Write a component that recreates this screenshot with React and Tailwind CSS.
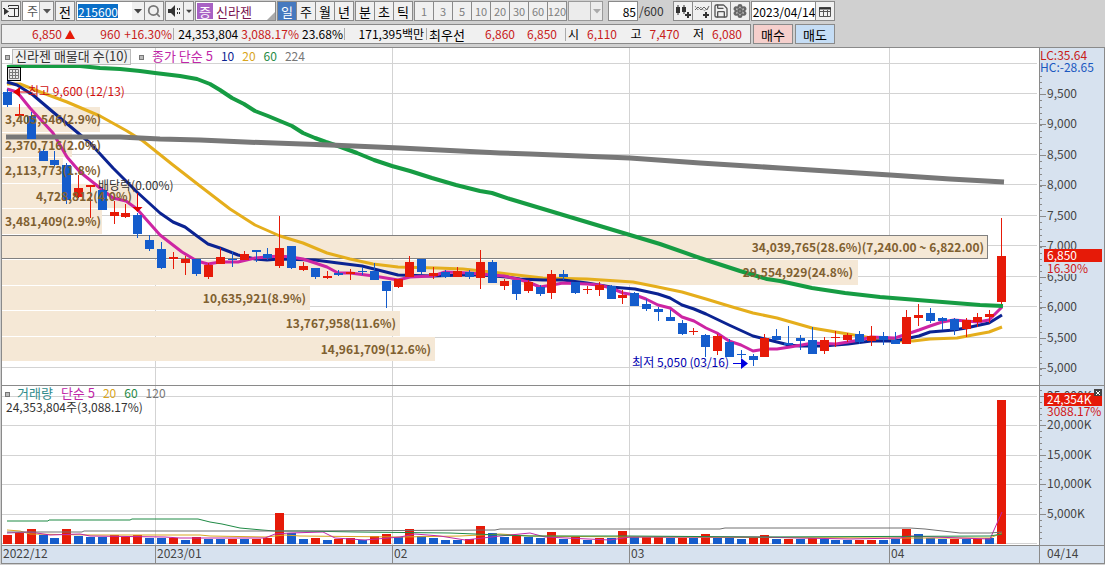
import { useState } from "react";
import { Save, Search, Settings } from "lucide-react";

const RED = "#e61a08";
const BLUE = "#145ccc";

// Plot geometry: both panes share one x range
const X0 = 2;
const PLOT_W = 1037;
const STEP = 994 / 84;
const PRICE_TOP = 48;
const VOLUME_TOP = 386;

const candleX = (i) => 7.5 + i * STEP;
const leftOf = (x) => `${((x - X0) / PLOT_W) * 100}%`;
const rightOf = (x) => `${((X0 + PLOT_W - x) / PLOT_W) * 100}%`;

// [direction, body top, body bottom, high, low]
const CANDLES = [
  ["d", 92, 105, 89, 107], ["u", 114, 116, 104, 117], ["d", 116, 139, 112, 139], ["d", 151, 161, 149, 161],
  ["d", 160, 165, 151, 166], ["d", 165, 200, 163, 204], ["u", 188, 197, 175, 198], ["u", 185, 187, 185, 218],
  ["d", 190, 210, 188, 210], ["u", 212, 216, 201, 224], ["u", 213, 217, 204, 218], ["d", 215, 234, 213, 238],
  ["d", 240, 249, 235, 251], ["d", 249, 268, 242, 269], ["u", 257, 259, 252, 269], ["u", 259, 263, 256, 275],
  ["d", 259, 274, 259, 276], ["u", 265, 277, 263, 279], ["u", 257, 264, 248, 264], ["d", 259, 260, 251, 267],
  ["u", 254, 260, 251, 260], ["d", 250, 252, 250, 262], ["d", 254, 258, 248, 260], ["u", 248, 266, 216, 268],
  ["d", 246, 268, 246, 269], ["u", 266, 270, 262, 271], ["d", 268, 277, 268, 279], ["u", 276, 278, 271, 279],
  ["d", 273, 275, 270, 276], ["u", 272, 274, 269, 280], ["d", 271, 272, 267, 275], ["d", 271, 280, 263, 280],
  ["d", 281, 291, 281, 308], ["u", 279, 287, 279, 288], ["u", 262, 277, 256, 277], ["d", 259, 272, 259, 274],
  ["u", 273, 276, 267, 279], ["d", 272, 277, 270, 278], ["u", 271, 277, 267, 277], ["d", 272, 277, 270, 279],
  ["u", 262, 278, 250, 289], ["d", 262, 283, 260, 283], ["u", 281, 286, 279, 290], ["d", 280, 294, 280, 300],
  ["u", 282, 291, 280, 293], ["d", 287, 294, 285, 296], ["u", 274, 293, 270, 299], ["d", 274, 277, 270, 280],
  ["d", 282, 293, 282, 294], ["u", 289, 290, 286, 294], ["u", 285, 290, 282, 296], ["d", 286, 299, 285, 299],
  ["u", 295, 298, 290, 304], ["d", 293, 306, 292, 306], ["d", 304, 309, 299, 311], ["d", 309, 312, 307, 321],
  ["d", 317, 321, 310, 321], ["d", 323, 334, 320, 335], ["u", 331, 332, 328, 335], ["d", 335, 347, 334, 357],
  ["u", 336, 351, 334, 355], ["d", 342, 357, 339, 357], ["d", 354, 355, 350, 358], ["d", 356, 360, 354, 366],
  ["u", 338, 357, 334, 357], ["d", 336, 340, 329, 340], ["d", 343, 345, 326, 345], ["d", 338, 341, 335, 350],
  ["d", 340, 354, 327, 354], ["u", 340, 351, 337, 354], ["u", 337, 338, 331, 347], ["u", 335, 340, 333, 342],
  ["d", 334, 342, 331, 344], ["u", 336, 341, 326, 346], ["d", 336, 340, 332, 345], ["d", 340, 344, 332, 344],
  ["u", 317, 344, 310, 344], ["u", 315, 318, 304, 326], ["d", 313, 321, 308, 323], ["d", 318, 321, 317, 330],
  ["d", 319, 330, 318, 335], ["u", 320, 329, 318, 337], ["u", 317, 322, 313, 327], ["u", 314, 317, 310, 323],
  ["u", 256, 302, 218, 304],
];

// Bar heights; the letter gives the colour against the previous day's volume
const VOLUMES =
  "u9 u11 u15 d9 d6 u15 d8 d7 d7 u9 u7 u9 d6 d6 u6 d4 u7 d5 d5 u5 d5 u5 u6 u31 d11 d5 u6 d4 u5 u6 d4 u8 u10 d7 u15 d8 d6 d4 d4 u5 u18 d11 d7 u9 d7 d6 u12 d5 u7 d4 u6 d6 u13 d7 u7 u7 d6 u6 d6 u10 d6 d6 d5 u6 u9 d5 u5 d5 u6 d5 d4 d4 u4 u4 d4 d5 u15 d10 d6 d5 u5 d5 u5 d6 u144".split(" ");

const PRICE_LINES = [
  {
    color: "#e5ae1c", width: 3,
    points: "7,84 20,84 43,93 67,102 100,116 127,131 143,141 173,165 200,186 230,209 255,225 280,236 303,243 327,253 350,259 373,264 398,267 437,268 463,269 500,273 543,278 587,279 633,282 658,287 682,292 706,299 729,306 753,313 777,318 812,328 848,334 883,340 895,341 913,341 930,339 957,338 978,334 989,332 1002,327",
  },
  {
    color: "#0b2392", width: 3,
    points: "7,82 17,85 25,90 33,95 53,112 90,143 113,168 137,192 160,213 173,222 185,227 197,236 208,244 220,248 238,255 255,259 267,260 279,259 315,260 338,263 362,266 374,269 398,275 433,276 463,275 481,275 507,277 520,279 543,280 563,280 587,283 611,287 635,289 658,294 670,298 682,305 694,309 706,314 729,325 753,336 765,339 789,345 800,346 823,346 848,344 871,341 895,341 919,336 930,332 954,330 966,328 989,323 1002,315",
  },
  {
    color: "#cd25a3", width: 3,
    points: "7,89 17,92 30,108 53,133 67,157 80,172 100,188 113,198 126,201 137,209 160,235 182,252 197,261 208,264 220,262 238,262 255,258 279,256 291,257 303,259 315,263 327,267 338,273 350,273 374,276 398,280 410,277 433,276 445,272 469,273 492,275 504,276 517,279 528,282 540,287 552,285 563,283 587,284 599,285 611,288 623,293 635,295 646,299 658,305 670,308 682,317 694,321 706,328 717,333 729,341 741,345 753,351 765,349 777,349 790,347 813,343 836,344 860,340 871,337 895,338 907,334 919,330 930,326 942,322 954,320 978,322 989,320 1002,307",
  },
  {
    color: "#169c43", width: 4,
    points: "7,67 20,66 80,66 100,68 120,69 140,71 155,73 180,76 197,79 210,84 220,90 232,98 244,104 255,111 268,116 280,121 292,126 303,133 315,138 326,142 338,146 357,153 374,160 392,166 410,171 432,178 456,185 480,191 492,193 510,199 530,205 580,220 620,232 660,244 700,258 740,271 767,279 780,281 812,288 845,293 880,297 930,301 980,305 1003,306",
  },
  {
    color: "#787878", width: 5,
    points: "6,137 120,137 160,139 200,140 245,142 330,145 400,148 500,153 530,154 630,158 700,163 780,168 890,175 950,179 1004,182",
  },
];

const VOLUME_LINES = [
  { color: "#d9a520", points: "7,530 20,531 30,534 90,535 200,535 210,536 265,537 285,535 300,536 400,537 460,536 500,534 530,536 630,537 900,538 990,538 1002,533" },
  { color: "#c026a8", points: "7,533 30,532 50,535 80,534 90,536 165,537 180,538 265,538 275,534 290,533 323,532 335,538 365,540 400,537 415,534 440,536 465,540 500,536 530,533 545,537 610,540 630,537 760,537 800,538 850,539 900,538 910,536 960,538 990,539 1002,512" },
  { color: "#1f8a45", points: "7,521 48,521 49,520 130,520 132,519 198,519 210,522 222,524 240,528 262,530 275,531 300,531 357,532 450,533 500,535 530,536 630,536 760,537 990,536 1002,534" },
  { color: "#707070", points: "7,532 82,532 84,531 300,531 495,530 500,529 720,529 725,528 910,528 925,529 960,533 990,533 1002,532" },
];

// Volume-at-price bands. Labels of the short bands start at the left edge,
// the others end at `at`.
const BANDS = [
  { y: 107, h: 25, end: 100, label: "3,405,546(2.9%)" },
  { y: 133, h: 24, end: 72, label: "2,370,716(2.0%)" },
  { y: 158, h: 25, end: 63, label: "2,113,773(1.8%)" },
  { y: 184, h: 24, end: 137, label: "4,728,812(4.0%)", at: 132 },
  { y: 209, h: 25, end: 102, label: "3,481,409(2.9%)" },
  { y: 235, h: 24, end: 988, label: "34,039,765(28.6%)(7,240.00 ~ 6,822.00)", at: 984 },
  { y: 260, h: 25, end: 858, label: "29,554,929(24.8%)", at: 853 },
  { y: 286, h: 24, end: 310, label: "10,635,921(8.9%)", at: 306 },
  { y: 311, h: 25, end: 400, label: "13,767,958(11.6%)", at: 396 },
  { y: 337, h: 24, end: 435, label: "14,961,709(12.6%)", at: 431 },
];

const MONTHS = [
  { x: 155, label: "2023/01" },
  { x: 392, label: "02" },
  { x: 629, label: "03" },
  { x: 889, label: "04" },
];

const PRICE_TICKS = [
  [94, "9,500"], [124, "9,000"], [155, "8,500"], [185, "8,000"], [216, "7,500"],
  [246, "7,000"], [277, "6,500"], [307, "6,000"], [338, "5,500"], [368, "5,000"],
];
const VOLUME_TICKS = [
  [396, "25,000K"], [425, "20,000K"], [455, "15,000K"], [484, "10,000K"], [514, "5,000K"],
];

const BOX = "h-5 shrink-0 border border-[#8a8a8a] bg-[#f0f0f0] flex items-center justify-center";

function ToolButton({ label, className = "", children, ...rest }) {
  return (
    <button type="button" aria-label={label} className={`${BOX} ${className}`} {...rest}>
      {children}
    </button>
  );
}

function Caret({ className = "" }) {
  return (
    <svg className={className} width="8" height="5" viewBox="0 0 8 5" fill="currentColor">
      <path d="M0 0h8L4 4.5z" />
    </svg>
  );
}

function PeriodGroup({ items, value, onChange, className }) {
  return (
    <div className="flex">
      {items.map((item, i) => (
        <ToolButton
          key={item}
          onClick={() => onChange(item)}
          className={`w-5 ${i ? "-ml-px" : ""} ${className} ${value === item ? "bg-[#4679bf]! text-white!" : ""}`}
        >
          {item}
        </ToolButton>
      ))}
    </div>
  );
}

function Toolbar() {
  const [period, setPeriod] = useState("일");

  return (
    <div className="flex gap-px pl-px pt-px">
      <ToolButton label="패널" className="w-5">
        <svg width="16" height="14" viewBox="0 0 16 14" fill="none" stroke="#333">
          <path d="M5.5 3V1.5h10v11h-10V11M5.5 4.5h10M11.5 4.5v8M0 4.5h2" />
          <path d="M1 4l5 3.5L1 11z" fill="#333" stroke="none" />
        </svg>
      </ToolButton>

      <div className="relative w-8">
        <select aria-label="구분" className="h-5 w-full appearance-none border border-[#8a8a8a] bg-white pl-1 leading-none text-[#555]">
          <option>주</option>
        </select>
        <span className="pointer-events-none absolute inset-y-px right-px flex w-[14px] items-center justify-center border-l border-[#aaa] bg-[#f0f0f0] text-[#555]">
          <Caret />
        </span>
      </div>

      <ToolButton className="w-5 text-[13px]">전</ToolButton>

      <div className="flex">
        <div className="flex h-5 w-[69px] border border-[#8a8a8a] bg-white">
          <input
            aria-label="종목코드"
            defaultValue="215600"
            className="my-[2px] ml-px w-10 bg-[#0a6fc8] leading-none text-white outline-none"
          />
          <button type="button" aria-label="종목 목록" className="ml-auto flex w-3 items-center justify-center bg-[#f0f0f0] text-[#444]">
            <Caret />
          </button>
        </div>
        <ToolButton label="검색" className="-ml-px w-5">
          <Search size={14} strokeWidth={3} color="#777" />
        </ToolButton>
      </div>

      <div className="flex">
        <ToolButton label="소리" className="w-[19px]">
          <svg width="14" height="12" viewBox="0 0 14 12" fill="#333">
            <path d="M0 4h3l4-4v12L3 8H0zM9 3h1v2H9zM9 7h1v2H9zM11 3h1v2h-1zM11 7h1v2h-1z" />
          </svg>
        </ToolButton>
        <ToolButton label="소리 설정" className="-ml-px w-[11px] text-[#444]">
          <Caret className="w-[6px]" />
        </ToolButton>
      </div>

      <div className={`${BOX} relative w-[81px] justify-start! bg-white! gap-[3px] pl-px text-[13px]`}>
        <span className="flex h-4 w-4 items-center justify-center bg-[#a862c4] leading-none text-white">증</span>
        <span className="leading-none text-[#7a1250]">신라젠</span>
        <svg className="absolute bottom-0 right-0" width="8" height="8" viewBox="0 0 8 8">
          <path d="M8 0v8H0z" fill="#aaa" />
        </svg>
      </div>

      <PeriodGroup items={["일", "주", "월", "년"]} value={period} onChange={setPeriod} className="text-[13px]" />
      <PeriodGroup items={["분", "초", "틱"]} value={period} onChange={setPeriod} className="text-[13px]" />
      <PeriodGroup
        items={["1", "3", "5", "10", "20", "30", "60", "120"]}
        value={period}
        onChange={setPeriod}
        className="text-[11px] text-[#808080]"
      />

      <div className="relative w-[35px]">
        <select disabled aria-label="주기" className="h-5 w-full appearance-none border border-[#9a9a9a] bg-[#ececec]" />
        <span className="pointer-events-none absolute inset-y-px right-px flex w-3 items-center justify-center border-l border-[#aaa] text-[#aaa]">
          <Caret />
        </span>
      </div>

      <label className="ml-1 flex items-center text-[#333]">
        <input
          aria-label="조회 개수"
          defaultValue="85"
          className="mr-px h-5 w-[30px] border border-[#8a8a8a] bg-white pr-px text-right text-black"
        />
        /600
      </label>

      <div className="ml-2 flex">
        <ToolButton label="봉 추가" className="w-5">
          <svg width="16" height="15" viewBox="0 0 16 15" fill="#333">
            <path d="M1 3h4v6H1zM2.500 1h1v10h-1zM7 3h4v5H7zM8.500 1h1v9h-1zM12 8h2v6h-2zM10 10h6v2h-6z" />
          </svg>
        </ToolButton>
        <ToolButton label="지표 추가" className="-ml-px w-5">
          <svg width="16" height="15" viewBox="0 0 16 15" fill="none" stroke="#666">
            <path d="M1 6l3-3 3 3 3-3 3 3 2-4" />
            <path d="M1 2l3 4 3-3 3 4 4-3" strokeDasharray="1 1" />
            <path d="M12 8v6M9 11h6" stroke="#333" strokeWidth="2" />
          </svg>
        </ToolButton>
        <ToolButton label="저장" className="-ml-px w-5">
          <Save size={16} strokeWidth={2} color="#555" />
        </ToolButton>
        <ToolButton label="설정" className="-ml-px w-5">
          <Settings size={14} strokeWidth={4} color="#666" />
        </ToolButton>
      </div>

      <div className="flex">
        <input aria-label="날짜" defaultValue="2023/04/14" className="h-5 w-[65px] border border-[#8a8a8a] bg-white pl-px text-black" />
        <ToolButton label="달력" className="-ml-px w-5">
          <svg width="12" height="11" viewBox="0 0 12 11" fill="none" stroke="#555">
            <path d="M.5 1.500h11v9H.5zM.5 5.500h11M4.500 4v6M8.500 4v6" />
            <path d="M0 2.500h12" stroke="#333" strokeWidth="2" />
          </svg>
        </ToolButton>
      </div>
    </div>
  );
}

function QuoteBar() {
  return (
    <div className="mt-[3px] flex gap-[2px] pl-px text-black">
      <div className="flex h-5 w-[750px] items-center divide-x divide-[#aaa] border border-[#8a8a8a] bg-[#f0f0f0] whitespace-nowrap">
        <div className="flex w-[172px] items-center pr-px text-[#c8201a]">
          <span className="w-[60px] text-right">6,850</span>
          <svg className="ml-[3px]" width="10" height="9" viewBox="0 0 10 9">
            <path d="M5 0l5 9H0z" fill={RED} />
          </svg>
          <span className="ml-auto mr-1">960</span>
          <span>+16.30%</span>
        </div>
        <div className="flex w-[171px] items-center justify-end gap-[3px] pr-px">
          <span>24,353,804</span>
          <span className="text-[#c8201a]">3,088.17%</span>
          <span>23.68%</span>
        </div>
        <div className="w-[82px] pr-[2px] text-right">171,395백만</div>
        <div className="flex w-[139px] items-center pl-[2px]">
          <span className="text-[13px]">최우선</span>
          <span className="ml-auto text-[#c8201a]">6,860</span>
          <span className="w-[50px] pr-2 text-right text-[#c8201a]">6,850</span>
        </div>
        <dl className="flex flex-1 items-center justify-between pl-[2px] pr-2">
          {[["시", "6,110"], ["고", "7,470"], ["저", "6,080"]].map(([name, price]) => (
            <div key={name} className="flex items-center gap-2">
              <dt>{name}</dt>
              <dd className="text-[#c8201a]">{price}</dd>
            </div>
          ))}
        </dl>
      </div>
      <button type="button" className="h-5 w-10 border border-[#8a8a8a] bg-[#f5cfcc] text-[13px]">매수</button>
      <button type="button" className="h-5 w-10 border border-[#8a8a8a] bg-[#c5ddf5] text-[13px]">매도</button>
    </div>
  );
}

function Grid({ ys, top, bottom }) {
  return (
    <g stroke="#d3d3d3" shapeRendering="crispEdges">
      {ys.map((y) => (
        <path key={y} d={`M2 ${y - 0.5}H1037`} />
      ))}
      {MONTHS.map(({ x }) => (
        <path key={x} d={`M${x + 0.5} ${top}V${bottom}`} />
      ))}
    </g>
  );
}

function Marker({ className = "" }) {
  return <span className={`h-[5px] w-[5px] shrink-0 border border-[#777] bg-[#bbb] ${className}`} />;
}

function PricePane() {
  return (
    <div className="relative h-[337px] overflow-hidden bg-white">
      <svg
        className="block h-full w-full"
        viewBox={`${X0} ${PRICE_TOP} ${PLOT_W} 337`}
        preserveAspectRatio="none"
      >
        <Grid ys={[64, ...PRICE_TICKS.map(([y]) => y)]} top={48} bottom={385} />
        {BANDS.map((b) => (
          <rect key={b.y} x={X0} y={b.y} width={b.end - X0} height={b.h} fill="#f5e8d6" />
        ))}
        <path d="M2 235.500H987.500V258.500H2" fill="none" stroke="#808080" shapeRendering="crispEdges" />
        {PRICE_LINES.map((l) => (
          <polyline key={l.color} points={l.points} fill="none" stroke={l.color} strokeWidth={l.width} strokeLinejoin="round" />
        ))}
        <g shapeRendering="crispEdges">
          {CANDLES.map(([dir, top, bottom, high, low], i) => {
            const x = Math.floor(candleX(i));
            const fill = dir === "u" ? RED : BLUE;
            return (
              <g key={i} fill={fill}>
                <rect x={x} y={high} width="1" height={low - high} />
                <rect x={x - 4} y={top} width="9" height={bottom - top} />
              </g>
            );
          })}
        </g>
        <path d="M13 92l7-5v10zM20 91.500h10v1H20zM132.500 207h10l-5 5zM137 193h1v14h-1z" fill="#e00000" />
        <path d="M733 363h8v1h-8zM741 358l7 5.500-7 5.500z" fill="#0000e0" />
      </svg>

      {BANDS.map((b) => (
        <span
          key={b.y}
          className="absolute -translate-y-1/2 font-bold whitespace-nowrap text-[#806030]"
          style={{ ...(b.at ? { right: rightOf(b.at) } : { left: leftOf(5) }), top: b.y + 12 - PRICE_TOP }}
        >
          {b.label}
        </span>
      ))}

      <span className="absolute top-[43px] -translate-y-1/2 whitespace-nowrap text-[#d01010]" style={{ left: leftOf(28) }}>
        최고 9,600 (12/13)
      </span>
      <span className="absolute top-[137px] -translate-y-1/2 whitespace-nowrap text-[#333]" style={{ left: leftOf(98) }}>
        배당락(0.00%)
      </span>
      <span className="absolute top-[314px] -translate-y-1/2 whitespace-nowrap text-[#0000b0]" style={{ right: rightOf(729) }}>
        최저 5,050 (03/16)
      </span>

      <div className="absolute left-[3px] top-px flex h-4 items-center text-[13px] whitespace-nowrap">
        <Marker />
        <span className="ml-[2px] flex h-4 w-[119px] items-center justify-center border border-[#bbb] bg-[#f0f0f0] pb-[3px] text-[#333]">
          신라젠 매물대 수(10)
        </span>
        <Marker className="ml-2" />
        <div className="ml-2 flex items-center gap-2 pb-[3px]">
          <span className="text-[#c026a8]">종가 단순 5</span>
          <span className="text-[12px] text-[#0b2392]">10</span>
          <span className="text-[12px] text-[#d9a520]">20</span>
          <span className="text-[12px] text-[#1f8a45]">60</span>
          <span className="text-[12px] text-[#777]">224</span>
        </div>
      </div>

      <button type="button" aria-label="데이터 표" className="absolute left-[5px] top-[19px] h-[14px] w-[14px] border border-black bg-[#e8e8e8]">
        <svg width="12" height="12" viewBox="0 0 12 12" fill="none" stroke="#777">
          <path d="M1.500 1.500h9v9h-9zM1.500 4.500h9M1.500 7.500h9M4.500 1.500v9M7.500 1.500v9" />
        </svg>
      </button>
    </div>
  );
}

function VolumePane() {
  return (
    <div className="relative h-[159px] overflow-hidden bg-white">
      <svg
        className="block h-full w-full"
        viewBox={`${X0} ${VOLUME_TOP} ${PLOT_W} 159`}
        preserveAspectRatio="none"
      >
        <Grid ys={[...VOLUME_TICKS.map(([y]) => y + 1), 544]} top={386} bottom={545} />
        <g shapeRendering="crispEdges">
          {VOLUMES.map((v, i) => {
            const h = Number(v.slice(1));
            return (
              <rect
                key={i}
                x={Math.floor(candleX(i)) - 4}
                y={544 - h}
                width="9"
                height={h}
                fill={v[0] === "u" ? RED : BLUE}
              />
            );
          })}
        </g>
        {VOLUME_LINES.map((l) => (
          <polyline key={l.color} points={l.points} fill="none" stroke={l.color} />
        ))}
      </svg>

      <div className="absolute left-[3px] top-0 flex h-4 items-center text-[13px] whitespace-nowrap">
        <Marker />
        <div className="ml-[7px] flex items-center gap-2 pb-[3px]">
          <span className="text-[#2e8b8b]">거래량</span>
          <span className="text-[#c026a8]">단순 5</span>
          <span className="text-[12px] text-[#d9a520]">20</span>
          <span className="text-[12px] text-[#1f8a45]">60</span>
          <span className="text-[12px] text-[#777]">120</span>
        </div>
      </div>
      <span className="absolute left-1 top-[21px] -translate-y-1/2 whitespace-nowrap text-[#333]">
        24,353,804주(3,088.17%)
      </span>
    </div>
  );
}

// Price/volume scale to the right of a pane
function Scale({ ticks, top, height, minor, children }) {
  return (
    <div className="relative overflow-hidden border-l border-r border-[#8a8a8a] bg-[#d7e2ef] text-[#444]" style={{ height }}>
      <svg className="absolute left-0 top-0" width="8" height={height} stroke="#8a8a8a" shapeRendering="crispEdges">
        {minor.map((y) => (
          <path key={y} d={`M0 ${Math.round(y - top) + 0.5}h2`} />
        ))}
        {ticks.map(([y]) => (
          <path key={y} d={`M0 ${y - top + 0.5}h6`} />
        ))}
      </svg>
      {ticks.map(([y, label]) => (
        <span key={y} className="absolute left-[7px] -translate-y-1/2" style={{ top: y - top - 1 }}>
          {label}
        </span>
      ))}
      {children}
    </div>
  );
}

const PRICE_MINOR = Array.from({ length: 50 }, (_, i) => 76 + i * 6.1);
const VOLUME_MINOR = Array.from({ length: 26 }, (_, i) => 390 + i * 5.9);

export default function App() {
  return (
    <div className="min-h-screen overflow-hidden bg-[#d0d0d0] font-['Noto_Sans_CJK_KR',sans-serif] text-[12px] leading-none text-black">
      <header className="h-[47px]">
        <Toolbar />
        <QuoteBar />
      </header>

      <main className="ml-px grid grid-cols-[minmax(0,1fr)_66px] border-l border-t border-[#8a8a8a]">
        <PricePane />
        <Scale ticks={PRICE_TICKS} top={PRICE_TOP} height={337} minor={PRICE_MINOR}>
          <span className="absolute left-0 top-px text-[#c8201a]">LC:35.64</span>
          <span className="absolute left-0 top-[13px] text-[#1a58c0]">HC:-28.65</span>
          <span className="absolute left-1 right-[2px] top-[201px] h-[13px] bg-[#e61a08] pl-[3px] text-white">6,850</span>
          <span className="absolute left-[7px] top-[214px] bg-[#d7e2ef] text-[#d01818]">16.30%</span>
        </Scale>

        <div className="col-span-2 h-px bg-[#8a8a8a]" />

        <VolumePane />
        <Scale ticks={VOLUME_TICKS} top={VOLUME_TOP} height={159} minor={VOLUME_MINOR}>
          <span className="absolute left-1 right-[2px] top-[7px] h-[13px] bg-[#e61a08] pl-[3px] text-white">24,354K</span>
          <span className="absolute left-[7px] top-[19px] text-[#d01818]">3088.17%</span>
          <button type="button" aria-label="닫기" className="absolute right-[2px] top-[3px] flex h-[7px] w-2 items-center justify-center bg-[#444]">
            <svg width="4" height="4" viewBox="0 0 4 4" stroke="#fff">
              <path d="M0 0l4 4M4 0L0 4" />
            </svg>
          </button>
        </Scale>

        {/* Date axis */}
        <div className="relative h-[19px] border-y border-[#8a8a8a] bg-[#d7e2ef] text-[#444]">
          <span className="absolute left-px top-px">2022/12</span>
          {MONTHS.map(({ x, label }) => (
            <span key={x} className="absolute inset-y-0 border-l border-[#8a8a8a] pl-px pt-px" style={{ left: leftOf(x) }}>
              {label}
            </span>
          ))}
        </div>
        <div className="h-[19px] border border-[#8a8a8a] bg-[#d7e2ef] pl-[7px] pt-px text-[#444]">04/14</div>
      </main>
    </div>
  );
}
